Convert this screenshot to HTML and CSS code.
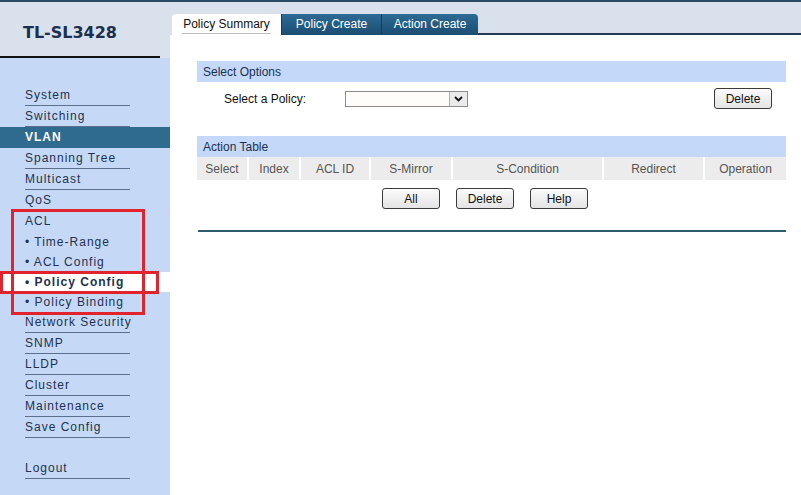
FILE: index.html
```html
<html>
<head>
  <meta charset="utf-8">
  <link rel="stylesheet" href="styles.css">
</head>
<body>
<div class="page">
  <div class="sidebar">
    <div class="brand">
      <div class="brand-name">TL-SL3428</div>
      <div class="brand-rule"></div>
    </div>
    <ul class="nav">
      <li class="item"><span>System</span></li>
      <li class="item"><span>Switching</span></li>
      <li class="item active"><span>VLAN</span></li>
      <li class="item"><span>Spanning Tree</span></li>
      <li class="item"><span>Multicast</span></li>
      <li class="item"><span>QoS</span></li>
      <li class="item open"><span>ACL</span></li>
      <li class="sub"><span>&bull; Time-Range</span></li>
      <li class="sub"><span>&bull; ACL Config</span></li>
      <li class="sub current"><span>&bull; Policy Config</span></li>
      <li class="sub"><span>&bull; Policy Binding</span></li>
      <li class="item"><span>Network Security</span></li>
      <li class="item"><span>SNMP</span></li>
      <li class="item"><span>LLDP</span></li>
      <li class="item"><span>Cluster</span></li>
      <li class="item"><span>Maintenance</span></li>
      <li class="item"><span>Save Config</span></li>
      <li class="item logout"><span>Logout</span></li>
    </ul>
    <div class="mark mark-group"></div>
    <div class="mark mark-row"></div>
  </div>

  <div class="main">
    <div class="tabbar">
      <div class="tab active"><span>Policy Summary</span></div>
      <div class="tab">Policy Create</div>
      <div class="tab last">Action Create</div>
      <div class="tab-fill"></div>
    </div>

    <div class="content">
      <div class="panel-title">Select Options</div>
      <div class="option-row">
        <label class="option-label">Select a Policy:</label>
        <div class="select"><div class="select-btn"><svg width="9" height="6" viewBox="0 0 9 6"><path d="M1 1 L4.5 4.5 L8 1" fill="none" stroke="#111" stroke-width="1.8"/></svg></div></div>
        <button class="btn btn-right">Delete</button>
      </div>

      <div class="panel-title table-title">Action Table</div>
      <div class="thead">
        <div class="th" style="width:50px">Select</div>
        <div class="th" style="width:52px">Index</div>
        <div class="th" style="width:70px">ACL ID</div>
        <div class="th" style="width:82px">S-Mirror</div>
        <div class="th" style="width:151px">S-Condition</div>
        <div class="th" style="width:101px">Redirect</div>
        <div class="th" style="width:83px">Operation</div>
      </div>
      <div class="actions">
        <button class="btn">All</button>
        <button class="btn">Delete</button>
        <button class="btn">Help</button>
      </div>
      <div class="rule"></div>
    </div>
  </div>
</div>
</body>
</html>
```

FILE: styles.css
```css
body {
  margin: 0;
  font-family: "Liberation Sans", Arial, sans-serif;
  font-size: 12px;
}
.page {
  display: flex;
  height: 495px;
  border-top: 2px solid #2b4a66;
  box-sizing: border-box;
}

/* sidebar */
.sidebar {
  position: relative;
  width: 170px;
  flex: none;
  background: #c5d9f7;
}
.brand {
  background: #d8e1ec;
  height: 56px;
}
.brand-name {
  height: 54px;
  padding-left: 23px;
  line-height: 61px;
  font-family: "DejaVu Sans", Verdana, sans-serif;
  font-weight: bold;
  font-size: 16px;
  color: #1d2e4e;
}
.brand-rule {
  width: 160px;
  height: 2px;
  background: #111;
}
.nav {
  list-style: none;
  margin: 27px 0 0;
  padding: 0;
}
.nav li {
  height: 21px;
  color: #23314f;
  letter-spacing: 1px;
  font-size: 12px;
}
.nav li span {
  display: block;
  margin-left: 25px;
  width: 105px;
  height: 20px;
  line-height: 20px;
  border-bottom: 1px solid #5c6f8c;
  white-space: nowrap;
}
.nav .active {
  background: #2f6a8f;
  color: #fff;
  font-weight: bold;
}
.nav .active span { border-bottom-color: #2f6a8f; }
.nav .open span { border-bottom-color: transparent; }
.nav .sub { height: 20px; }
.nav .sub span { border-bottom: none; }
.nav .current {
  background: #fff;
  font-weight: bold;
}
.nav .logout { margin-top: 20px; }

.mark {
  position: absolute;
  border: 3px solid #e0232d;
  box-sizing: border-box;
}
.mark-group {
  left: 11px;
  top: 207px;
  width: 134px;
  height: 106px;
}
.mark-row {
  left: 0;
  top: 269px;
  width: 159px;
  height: 23px;
}

/* main */
.main {
  flex: 1;
  background: #fff;
}
.tabbar {
  display: flex;
  align-items: flex-end;
  height: 33px;
  background: #d8e1ec;
  padding-left: 2px;
}
.tab {
  height: 21px;
  line-height: 21px;
  width: 99px;
  text-align: center;
  font-size: 12px;
  color: #fff;
  background: linear-gradient(#2d6b94, #1b4d72);
  border-left: 1px solid #163f5e;
}
.tab.active {
  width: 109px;
  background: #fff;
  color: #111;
  border-left: none;
  border-radius: 4px 0 0 0;
  height: 22px;
  margin-bottom: -1px;
}
.tab.active span {
  display: inline-block;
  line-height: 18px;
  border-bottom: 1px solid #b9bec6;
  padding: 0 1px;
  margin-top: 1px;
}
.tab.last {
  width: 96px;
  border-radius: 0 4px 0 0;
}
.tab-fill {
  flex: 1;
  height: 2px;
  background: #253a52;
}

.content {
  width: 589px;
  margin: 26px 0 0 27px;
}
.panel-title {
  height: 21px;
  line-height: 22px;
  padding-left: 6px;
  background: #c4d9f9;
  color: #1b2f4f;
}
.option-row {
  display: flex;
  align-items: center;
  height: 33px;
}
.option-label {
  margin-left: 27px;
  width: 121px;
  color: #111;
}
.select {
  position: relative;
  width: 121px;
  height: 14px;
  border: 1px solid #8c8c8c;
  background: #fffdfa;
}
.select-btn {
  position: absolute;
  right: 0;
  top: 0;
  width: 17px;
  height: 14px;
  background: #ebebeb;
  border-left: 1px solid #b0b0b0;
  display: flex;
  align-items: center;
  justify-content: center;
}
.btn {
  width: 58px;
  height: 21px;
  padding: 0;
  border: 1px solid #3b3b3b;
  border-radius: 3px;
  background: linear-gradient(#fbfbfb, #e4e4e4);
  font-family: "Liberation Sans", Arial, sans-serif;
  font-size: 12px;
  color: #111;
}
.btn-right { margin-left: auto; margin-right: 14px; }

.table-title { margin-top: 21px; }
.thead {
  display: flex;
  height: 23px;
  background: #ececec;
}
.th {
  line-height: 24px;
  text-align: center;
  color: #555;
  border-left: 2px solid #fff;
  box-sizing: border-box;
}
.th:first-child { border-left: none; }
.actions {
  display: flex;
  justify-content: center;
  gap: 16px;
  margin-top: 8px;
  padding-right: 13px;
}
.rule {
  margin: 21px 0 0 1px;
  height: 2px;
  background: #2e5b6d;
}
```
